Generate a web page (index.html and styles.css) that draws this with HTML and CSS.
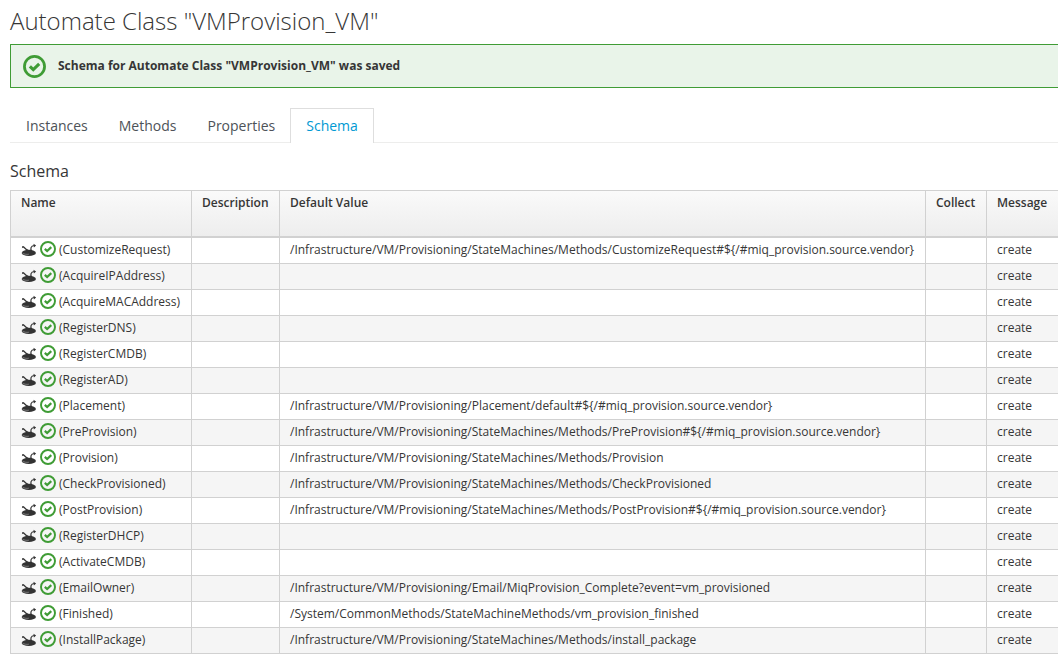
FILE: index.html
```
<!DOCTYPE html>
<html lang="en">
<head>
<meta charset="utf-8">
<title>Automate Class "VMProvision_VM"</title>
<link rel="stylesheet" href="styles.css">
</head>
<body>
<svg class="sprite" aria-hidden="true">
  <symbol id="ok" viewBox="0 0 24 24">
    <circle cx="12" cy="12" r="10.500" fill="none" stroke="currentColor" stroke-width="2.900"/>
    <path d="M7.200 11.800l3.500 3.400 6.200-6" fill="none" stroke="currentColor" stroke-width="3.200"/>
  </symbol>
  <symbol id="state" viewBox="0 0 16 14">
    <ellipse cx="7.800" cy="9.900" rx="7.100" ry="3.100" fill="currentColor"/>
    <path d="M1.400 10c1.700 1.200 4 1.600 6.500 1.200" fill="none" stroke="#aaa" stroke-width=".6"/>
    <path d="M2.200 4.200C4.500 4.500 4.500 7 7.500 7.800M10.800 8.200C9 5.700 9.700 3 13.300 2.500" fill="none" stroke="currentColor" stroke-width="1.200"/>
    <path d="M.9 5.200L1.300 3 3.500 3.600zM12.500.7l2.600 1.700-2.200 2.100zM6 6.300l3.400 1.600L6 9z" fill="currentColor"/>
  </symbol>
</svg>
<main class="page">
  <h1 class="title">Automate Class "VMProvision_VM"</h1>
  <div class="alert" role="status">
    <svg class="alert-icon" aria-hidden="true"><use href="#ok"/></svg>
    <strong>Schema for Automate Class "VMProvision_VM" was saved</strong>
  </div>
  <nav class="tabs">
    <a class="tab" href="#instances">Instances</a>
    <a class="tab" href="#methods">Methods</a>
    <a class="tab" href="#properties">Properties</a>
    <a class="tab active" href="#schema" aria-current="page">Schema</a>
  </nav>
  <h2 class="subtitle" id="schema">Schema</h2>
  <table class="grid">
    <colgroup><col class="col-name"><col class="col-description"><col class="col-value"><col class="col-collect"><col></colgroup>
    <thead>
      <tr><th>Name</th><th>Description</th><th>Default Value</th><th>Collect</th><th>Message</th></tr>
    </thead>
    <tbody id="rows"></tbody>
  </table>
</main>
<script src="rows.js"></script>
</body>
</html>
```
FILE: styles.css
```
* { box-sizing: border-box; }
body {
  margin: 0;
  background: #fff;
  color: #363636;
  font-family: "Open Sans", "Noto Sans", sans-serif;
  font-size: 12px;
  line-height: 20px;
  overflow-x: hidden;
}
.sprite { display: none; }
.page { padding: 8px 0 14px 10px; }
.title { margin: 0 0 10px; font-size: 24px; line-height: 26px; font-weight: 300; }
.alert {
  display: flex;
  align-items: center;
  gap: 12px;
  height: 44px;
  padding: 0 12px;
  border: 1px solid #3f9c35;
  border-right: 0;
  border-radius: 1px 0 0 1px;
  background: #e9f4e9;
}
.alert strong { font-weight: 700; }
.alert-icon { width: 23px; height: 23px; color: #3f9c35; }
.tabs {
  display: flex;
  margin-top: 20px;
  border-bottom: 1px solid #ededec;
}
.tab {
  margin: 0 -1px -1px 0;
  padding: 7px 15px;
  border: 1px solid transparent;
  border-bottom: 0;
  color: #4d5258;
  font-size: 14px;
  line-height: 20px;
  text-decoration: none;
}
.tab.active { border-color: #dedede; background: #fff; color: #0099d3; }
.subtitle { margin: 18px 0 9px; font-size: 16px; line-height: 20px; font-weight: 400; }
.grid { width: 100%; border-collapse: collapse; white-space: nowrap; }
.col-name { width: 181px; }
.col-description { width: 88px; }
.col-value { width: 646px; }
.col-collect { width: 61px; }
.grid th, .grid td { border: 1px solid #d1d1d1; padding: 2px 10px 3px; text-align: left; }
.grid th:last-child, .grid td:last-child { border-right: 0; }
.grid thead { background: linear-gradient(#fafafa, #ededed); }
.grid th { height: 46px; border-bottom-width: 2px; font-weight: 600; vertical-align: top; }
.grid tbody tr:nth-child(even) { background: #f5f5f5; }
.name { display: flex; align-items: center; gap: 3px; height: 20px; }
.state-icon { width: 16px; height: 14px; color: #333; }
.ok-icon { width: 16px; height: 16px; margin-bottom: 2px; color: #3f9c35; }
```
FILE: rows.js
```
const base = '/Infrastructure/VM/Provisioning/';
const methods = base + 'StateMachines/Methods/';
const vendor = '#${/#miq_provision.source.vendor}';
const fields = [
  ['CustomizeRequest', methods + 'CustomizeRequest' + vendor],
  ['AcquireIPAddress', ''],
  ['AcquireMACAddress', ''],
  ['RegisterDNS', ''],
  ['RegisterCMDB', ''],
  ['RegisterAD', ''],
  ['Placement', base + 'Placement/default' + vendor],
  ['PreProvision', methods + 'PreProvision' + vendor],
  ['Provision', methods + 'Provision'],
  ['CheckProvisioned', methods + 'CheckProvisioned'],
  ['PostProvision', methods + 'PostProvision' + vendor],
  ['RegisterDHCP', ''],
  ['ActivateCMDB', ''],
  ['EmailOwner', base + 'Email/MiqProvision_Complete?event=vm_provisioned'],
  ['Finished', '/System/CommonMethods/StateMachineMethods/vm_provision_finished'],
  ['InstallPackage', methods + 'install_package']
];
document.getElementById('rows').innerHTML = fields.map(([name, value]) => `
  <tr>
    <td><span class="name"><svg class="state-icon" aria-hidden="true"><use href="#state"/></svg><svg class="ok-icon" aria-hidden="true"><use href="#ok"/></svg><span>(${name})</span></span></td>
    <td></td><td>${value}</td><td></td><td>create</td>
  </tr>`).join('');
```
